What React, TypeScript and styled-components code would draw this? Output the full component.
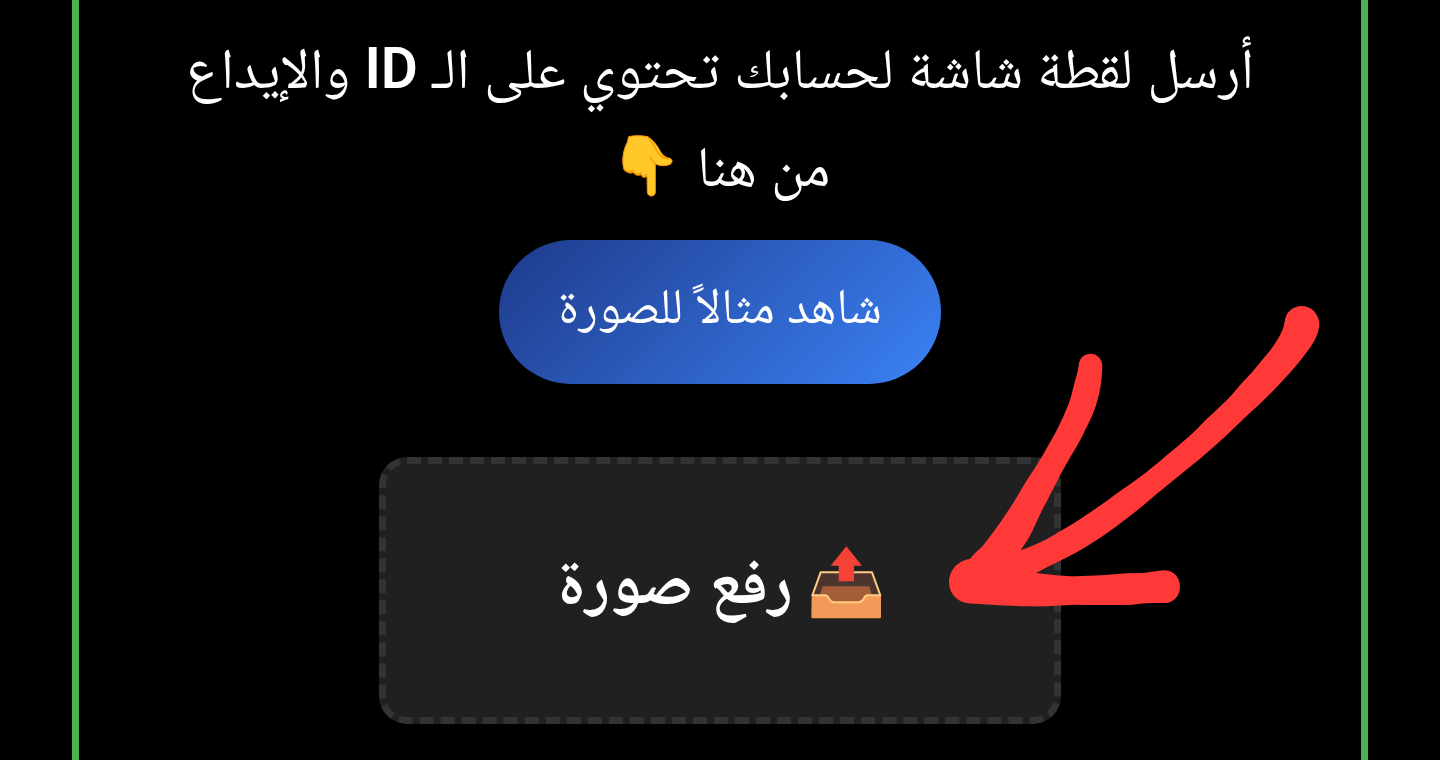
import React from "react";
import styled, { createGlobalStyle } from "styled-components";

const GlobalStyle = createGlobalStyle`
  *, *::before, *::after { box-sizing: border-box; }
  html, body { margin: 0; background: #000; }
  body {
    color: #fff;
    font-family: Roboto, "Noto Naskh Arabic", "Noto Sans Arabic", "DejaVu Sans", sans-serif;
  }
`;

const Page = styled.div`
  padding: 0 5%;
  overflow: hidden;
`;

const Panel = styled.main`
  min-height: 100vh;
  padding: 20px 92px 36px;
  border: solid #4caf50;
  border-width: 0 7px;
  display: flex;
  flex-direction: column;
  align-items: center;
`;

const Instruction = styled.p`
  margin: 0 0 24px;
  font-size: 57px;
  line-height: 98px;
  text-align: center;

  strong {
    font-weight: 600;
  }
`;

const HandIcon = styled.svg`
  width: 52px;
  height: 64px;
  margin-inline: 10px 11px;
  vertical-align: -12px;
`;

const ExampleButton = styled.button`
  min-height: 144px;
  padding: 0 59px 12px;
  border: 0;
  border-radius: 72px;
  background: linear-gradient(135deg, #1e3a8a, #3b82f6);
  color: #fff;
  font-family: inherit;
  font-size: 50px;
  line-height: 64px;
  cursor: pointer;
`;

const UploadArea = styled.div`
  position: relative;
  width: 682px;
  max-width: 100%;
  margin-top: 73px;
`;

const UploadButton = styled.button`
  display: flex;
  align-items: center;
  justify-content: center;
  gap: 18px;
  width: 100%;
  min-height: 267px;
  padding: 0 0 18px;
  border: 7px dashed #333;
  border-radius: 28px;
  background: #202020;
  color: #fff;
  font-family: inherit;
  font-size: 65px;
  font-weight: 700;
  line-height: 84px;
  cursor: pointer;
`;

const TrayIcon = styled.svg`
  width: 72px;
  height: 74px;
`;

const Arrow = styled.svg`
  position: absolute;
  right: -259px;
  bottom: 117px;
  width: 372px;
  height: 302px;
  pointer-events: none;
`;

export default function App() {
  return (
    <Page dir="rtl" lang="ar">
      <GlobalStyle />
      <Panel>
        <Instruction>
          أرسل لقطة شاشة لحسابك تحتوي على الـ <strong>ID</strong> والإيداع من هنا{" "}
          <HandIcon viewBox="0 0 156 192" role="img" aria-label="أسفل">
            <path
              d="M23 8C38 4 65 4 80 8C94 16 106 31 114 45C123 63 132 70 147 73C156 77 155 89 145 92C130 97 114 96 103 89L103 174C103 190 79 190 79 174L78 126C71 134 60 129 60 121C51 128 39 122 38 115C28 121 12 114 8 103C2 80 6 48 19 25Z"
              fill="#ffc828"
              stroke="#f59300"
              strokeWidth="3"
            />
            <path
              d="M79 8C91 18 97 34 108 52C118 68 130 75 146 74M103 89C96 84 91 77 88 69M9 105C13 113 27 117 36 108M38 114C43 123 57 123 61 114M61 121C65 129 75 129 78 121"
              fill="none"
              stroke="#f59a08"
              strokeWidth="4"
              strokeLinecap="round"
            />
          </HandIcon>
        </Instruction>
        <ExampleButton type="button">شاهد مثالاً للصورة</ExampleButton>
        <UploadArea>
          <UploadButton type="button">
            <TrayIcon viewBox="0 0 216 222" aria-hidden="true">
              <path d="M32 82H186L208 154H8Z" fill="#4e342e" />
              <path d="M38 124H178L186 151H171L150 174H66L47 151H29Z" fill="#a45d38" />
              <path
                d="M5 151H47Q54 152 59 163Q64 172 75 172H143Q154 172 159 163Q164 152 171 151H213V216Q213 220 209 220H9Q4 220 4 216Z"
                fill="#f39959"
              />
              <path
                d="M7 151L32 82H186L211 151H172Q165 152 160 163Q155 172 144 172H74Q64 172 58 163Q53 152 46 151Z"
                fill="none"
                stroke="#ffcc80"
                strokeWidth="6"
                strokeLinejoin="round"
              />
              <path d="M109 4L156 62H132V109H86V62H62Z" fill="#f44336" />
            </TrayIcon>
            <span>رفع صورة</span>
          </UploadButton>
          <Arrow viewBox="54 45 1116 906" aria-hidden="true">
            <path
              fill="#ff3838"
              d="M1064 95C1066 68 1088 48 1115 48C1145 48 1167 72 1168 102C1167 140 1142 178 1080 248C1040 291 1010 323 990 341C960 367 935 392 912 414C890 436 860 464 830 489C780 532 700 594 640 646C570 703 510 747 440 787C400 809 360 827 318 849C350 853 390 858 436 859C490 857 540 855 590 850L640 849C660 847 680 842 705 841C732 842 750 864 750 890C750 916 732 938 706 939C680 939 655 939 630 941C610 944 600 946 580 945C530 944 480 946 435 944C390 946 350 950 300 949C240 948 170 944 115 940C80 937 57 908 57 877C57 842 83 811 120 807C130 793 145 781 158 768C185 733 205 708 225 676C250 640 265 615 283 583C310 541 325 518 337 498C350 473 370 443 385 411C405 370 422 332 428 300C434 275 444 248 447 220C450 203 464 191 482 191C502 192 517 207 517 228C516 255 514 285 507 313C500 345 485 385 465 421C455 445 430 487 420 503C405 530 390 553 377 582C365 605 350 636 340 653C325 683 310 720 295 746L272 781C310 769 360 744 390 724C440 696 490 662 580 596C640 557 670 530 710 496C760 455 790 430 830 387C860 360 880 341 905 315C925 291 940 273 965 248C985 223 1000 205 1020 182C1040 154 1060 125 1064 95Z"
            />
          </Arrow>
        </UploadArea>
      </Panel>
    </Page>
  );
}
